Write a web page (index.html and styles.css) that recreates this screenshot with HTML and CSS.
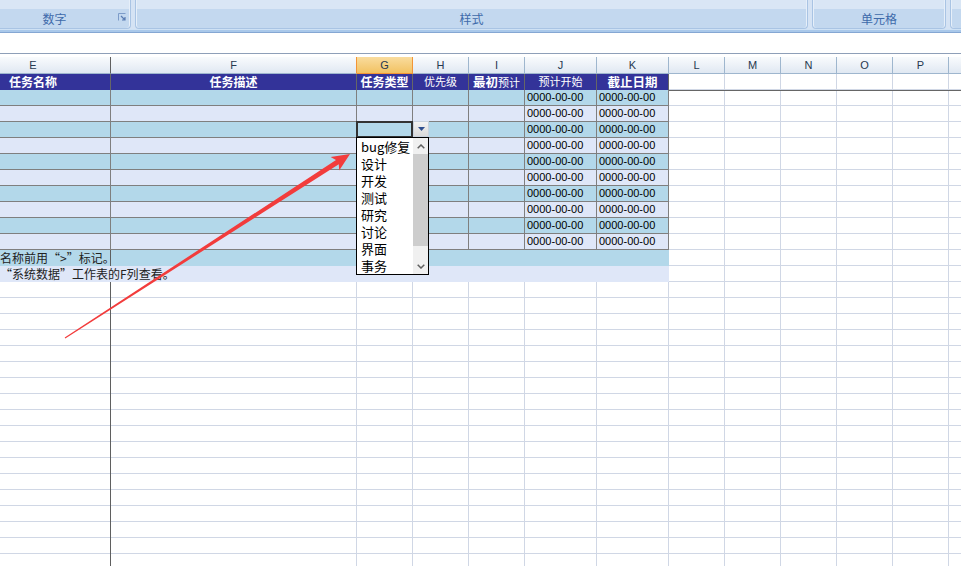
FILE: index.html
```html
<!DOCTYPE html>
<html lang="zh">
<head>
<meta charset="utf-8">
<title>任务表</title>
<link rel="stylesheet" href="styles.css">
</head>
<body>
<div class="ribbon">
  <div class="group g-num">
    <span class="glabel">数字</span>
    <svg class="launcher" width="8" height="8" viewBox="0 0 8 8"><path d="M0.5 7.5V0.5H7.5" fill="none" stroke="#7d9cc9"/><path d="M3 3L7 7M7 4V7H4" fill="none" stroke="#5a7db3" stroke-width="1.2"/></svg>
  </div>
  <div class="group g-style"><span class="glabel">样式</span></div>
  <div class="group g-cell"><span class="glabel">单元格</span></div>
  <div class="group g-more"></div>
</div>
<div class="ribbon-edge"></div>
<div class="formula"></div>

<div class="sheet">
  <div class="colheads">
    <div class="ch ch-e">E</div><div class="ch ch-f">F</div><div class="ch ch-g">G</div><div class="ch">H</div><div class="ch">I</div><div class="ch">J</div><div class="ch">K</div><div class="ch">L</div><div class="ch">M</div><div class="ch">N</div><div class="ch">O</div><div class="ch">P</div><div class="ch"></div>
  </div>
  <div class="grid">
    <div class="row hrow">
      <div>任务名称</div><div>任务描述</div><div>任务类型</div><div class="nb">优先级</div><div><span class="big">最初</span><span class="nb">预计</span></div><div class="nb">预计开始</div><div class="big">截止日期</div><div class="fill"></div>
    </div>
    <div class="row drow b"><div></div><div></div><div></div><div></div><div></div><div>0000-00-00</div><div>0000-00-00</div><div class="fill"></div></div>
    <div class="row drow l"><div></div><div></div><div></div><div></div><div></div><div>0000-00-00</div><div>0000-00-00</div><div class="fill"></div></div>
    <div class="row drow b"><div></div><div></div><div></div><div></div><div></div><div>0000-00-00</div><div>0000-00-00</div><div class="fill"></div></div>
    <div class="row drow l"><div></div><div></div><div></div><div></div><div></div><div>0000-00-00</div><div>0000-00-00</div><div class="fill"></div></div>
    <div class="row drow b"><div></div><div></div><div></div><div></div><div></div><div>0000-00-00</div><div>0000-00-00</div><div class="fill"></div></div>
    <div class="row drow l"><div></div><div></div><div></div><div></div><div></div><div>0000-00-00</div><div>0000-00-00</div><div class="fill"></div></div>
    <div class="row drow b"><div></div><div></div><div></div><div></div><div></div><div>0000-00-00</div><div>0000-00-00</div><div class="fill"></div></div>
    <div class="row drow l"><div></div><div></div><div></div><div></div><div></div><div>0000-00-00</div><div>0000-00-00</div><div class="fill"></div></div>
    <div class="row drow b"><div></div><div></div><div></div><div></div><div></div><div>0000-00-00</div><div>0000-00-00</div><div class="fill"></div></div>
    <div class="row drow l"><div></div><div></div><div></div><div></div><div></div><div>0000-00-00</div><div>0000-00-00</div><div class="fill"></div></div>
    <div class="nrow n1"><div class="ntext ne">名称前用“&gt;”标记。</div><div></div></div>
    <div class="nrow n2"><div class="ntext">“系统数据”工作表的F列查看。</div></div>
  </div>
</div>

<div class="sel"></div>
<div class="dd-btn"><svg width="7" height="4" viewBox="0 0 7 4"><path d="M0 0H7L3.5 4Z" fill="#2f4f8f"/></svg></div>
<div class="dropdown">
  <div class="items">
    <div class="item">bug修复</div>
    <div class="item">设计</div>
    <div class="item">开发</div>
    <div class="item">测试</div>
    <div class="item">研究</div>
    <div class="item">讨论</div>
    <div class="item">界面</div>
    <div class="item">事务</div>
  </div>
  <div class="sb">
    <div class="sb-btn"><svg width="8" height="5" viewBox="0 0 8 5"><path d="M0.7 4.3L4 1L7.3 4.3" fill="none" stroke="#606060" stroke-width="1.5"/></svg></div>
    <div class="thumb"></div>
    <div class="track"></div>
    <div class="sb-btn"><svg width="8" height="5" viewBox="0 0 8 5"><path d="M0.7 0.7L4 4L7.3 0.7" fill="none" stroke="#606060" stroke-width="1.5"/></svg></div>
  </div>
</div>

<svg class="arrow" width="961" height="566" viewBox="0 0 961 566">
  <polygon points="65.3,338.5 338.8,164.2 339.2,170.5 350,154 330.6,157.1 336.0,160.0 64.7,337.5" fill="#f23c3c"/>
</svg>
</body>
</html>
```

FILE: styles.css
```css
* { box-sizing: border-box; }
html, body { margin: 0; padding: 0; }
body {
  width: 961px;
  height: 566px;
  overflow: hidden;
  position: relative;
  background: #fff;
  font-family: "Noto Sans CJK SC", "Liberation Sans", sans-serif;
}

/* ribbon */
.ribbon {
  display: flex;
  gap: 4px;
  height: 29px;
  margin-left: -10px;
  background: #d5e3f4;
}
.group {
  flex: none;
  display: flex;
  align-items: flex-end;
  border: 1px solid #a9c4e4;
  border-top: 0;
  border-radius: 0 0 4px 4px;
  background: linear-gradient(#d9e6f5 0, #d9e6f5 9px, #c3d8ef 9px);
  box-shadow: inset 1px 0 #e6eff9, inset -1px 0 #e6eff9;
}
.glabel {
  flex: 1;
  text-align: center;
  font-size: 12px;
  line-height: 19px;
  height: 19px;
  color: #3e6aaa;
}
.g-num { width: 141px; }
.launcher { flex: none; align-self: flex-start; margin: 13px 4px 0 0; }
.g-style { width: 673px; }
.g-cell { width: 134px; }
.g-more { width: 60px; }

.ribbon-edge {
  height: 4px;
  background: linear-gradient(#cfe2f5 0, #cfe2f5 1px, #a9c8ea 1px, #a9c8ea 3px, #85a7d3 3px);
}
.formula {
  height: 21px;
  border-bottom: 1px solid #8e9fb8;
  margin-bottom: 3px;
  background: #fff;
}

/* sheet */
.sheet {
  margin-left: -44px;
  width: 1005px;
}
.colheads {
  display: grid;
  grid-template-columns: 155px 246px 56px 56px 56px 72px 72px 56px 56px 56px 56px 56px 56px;
  height: 17px;
}
.ch {
  border-right: 1px solid #9eb6ce;
  border-bottom: 1px solid #9eb6ce;
  background: linear-gradient(#f9fbfd, #e0e8f2);
  font: 11px/16px "Liberation Sans", sans-serif;
  color: #27384f;
  text-align: center;
}
.ch-e { border-right-color: #5f5f5f; }
.ch-f { border-right-color: #f29536; }
.ch-g {
  background: linear-gradient(#f9dc9e, #f2c262);
  border-right-color: #f29536;
  border-bottom-color: #f29536;
}

.grid {
  height: 492px;
  background-color: #fff;
  background-image:
    linear-gradient(#5f5f5f, #5f5f5f),
    linear-gradient(#d0d7e5, #d0d7e5),
    linear-gradient(#d0d7e5, #d0d7e5),
    linear-gradient(#d0d7e5, #d0d7e5),
    linear-gradient(#d0d7e5, #d0d7e5),
    linear-gradient(#d0d7e5, #d0d7e5),
    linear-gradient(#d0d7e5, #d0d7e5),
    linear-gradient(#d0d7e5, #d0d7e5),
    linear-gradient(#d0d7e5, #d0d7e5),
    linear-gradient(#d0d7e5, #d0d7e5),
    linear-gradient(#d0d7e5, #d0d7e5),
    linear-gradient(#d0d7e5, #d0d7e5),
    repeating-linear-gradient(transparent 0, transparent 15px, #d0d7e5 15px, #d0d7e5 16px);
  background-size: 1px 100%, 1px 100%, 1px 100%, 1px 100%, 1px 100%, 1px 100%, 1px 100%, 1px 100%, 1px 100%, 1px 100%, 1px 100%, 1px 100%, 100% 100%;
  background-position: 154px 0, 400px 0, 456px 0, 512px 0, 568px 0, 640px 0, 712px 0, 768px 0, 824px 0, 880px 0, 936px 0, 992px 0, 0 0;
  background-repeat: no-repeat;
}
.row {
  display: grid;
  grid-template-columns: 155px 246px 56px 56px 56px 72px 72px 1fr;
  height: 16px;
}
.hrow > div {
  background: #333399;
  color: #fff;
  border-right: 1px solid #666;
  border-bottom: 1px solid #666;
  text-align: center;
  font-size: 12px;
  line-height: 15px;
  font-weight: bold;
  white-space: nowrap;
}
.hrow .nb { font-weight: normal; font-size: 11px; }
.hrow .big { font-weight: bold; font-size: 12.5px; }
.hrow > .fill { background: transparent; border-right: 0; }

.drow > div {
  border-right: 1px solid #7f7f7f;
  border-bottom: 1px solid #7f7f7f;
  font: 11px/15px "Liberation Sans", sans-serif;
  padding-left: 2px;
  color: #000;
  white-space: nowrap;
}
.drow > .fill { border: 0; }
.b > div:not(.fill) { background: #b3d8ea; }
.l > div:not(.fill) { background: #dfe7f8; }

.nrow {
  display: grid;
  grid-template-columns: 155px 558px;
  height: 16px;
}
.n1 > div { background: #b3d8ea; }
.n1 .ne { border-right: 1px solid #5f5f5f; }
.n2 { grid-template-columns: 713px; }
.n2 > div { background: #dfe7f8; }
.ntext {
  font-size: 12px;
  line-height: 16px;
  padding-left: 44px;
  white-space: nowrap;
  color: #222;
}

/* selection + dropdown overlay */
.sel {
  position: absolute;
  left: 356px;
  top: 121px;
  width: 57px;
  height: 17px;
  border: 2px solid #333;
}
.dd-btn {
  position: absolute;
  left: 413px;
  top: 121px;
  width: 16px;
  height: 16px;
  background: linear-gradient(#f4f4f4, #d9d9d9);
  border: 1px solid #c8d2de;
  display: flex;
  align-items: center;
  justify-content: center;
}
.dropdown {
  position: absolute;
  left: 356px;
  top: 137px;
  width: 73px;
  height: 138px;
  border: 1px solid #000;
  background: #fff;
  display: flex;
}
.items { flex: 1; padding-left: 4px; }
.item {
  height: 17px;
  font-size: 13px;
  line-height: 17px;
  color: #000;
  white-space: nowrap;
}
.sb {
  width: 15px;
  display: flex;
  flex-direction: column;
  background: #f0f0f0;
}
.sb-btn {
  height: 16px;
  display: flex;
  align-items: center;
  justify-content: center;
}
.thumb { height: 92px; background: #cdcdcd; }
.track { flex: 1; }

.arrow {
  position: absolute;
  left: 0;
  top: 0;
  pointer-events: none;
}
```
